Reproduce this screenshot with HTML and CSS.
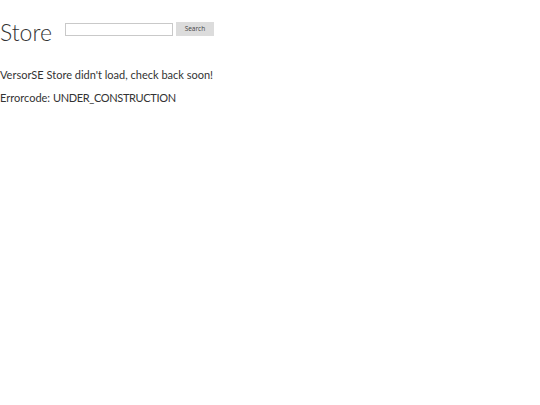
FILE: index.html
```html
<!DOCTYPE html>
<html>
<head>
<meta charset="utf-8">
<link rel="stylesheet" href="styles.css">
</head>
<body>
<div class="page">
  <div class="header">
    <h1 class="title">Store</h1>
    <form class="search">
      <input class="search-input" type="text">
      <button class="search-btn" type="button">Search</button>
    </form>
  </div>
  <p class="msg">VersorSE Store didn't load, check back soon!</p>
  <p class="msg">Errorcode: <span class="code">UNDER_CONSTRUCTION</span></p>
</div>
</body>
</html>
```
FILE: styles.css
```css
html, body {
  margin: 0;
  padding: 0;
  background: #fff;
}
.page {
  font-family: "Lato", "Open Sans", sans-serif;
  color: #222;
  padding-top: 16px;
}
.header {
  display: flex;
  align-items: flex-start;
  height: 32px;
}
.title {
  margin: 0 13px 0 0;
  font-weight: 300;
  font-size: 23px;
  line-height: 32px;
  color: #333;
}
.search {
  display: flex;
  align-items: flex-start;
  gap: 3px;
  margin: 0;
  padding-top: 6px;
}
.search-input {
  box-sizing: border-box;
  width: 108px;
  height: 13px;
  margin: 1px 0 0 0;
  padding: 0;
  border: 1px solid #c9c9c9;
  background: #fff;
}
.search-btn {
  box-sizing: border-box;
  width: 38px;
  height: 14px;
  padding: 0;
  border: none;
  background: #dcdcdc;
  color: #444;
  font-family: "Open Sans", sans-serif;
  font-size: 6.5px;
  line-height: 14px;
}
.msg {
  margin: 0;
  font-size: 11px;
  line-height: 23px;
  color: #333;
}
.code {
  letter-spacing: -0.35px;
}
.header + .msg {
  margin-top: 15px;
}
```
